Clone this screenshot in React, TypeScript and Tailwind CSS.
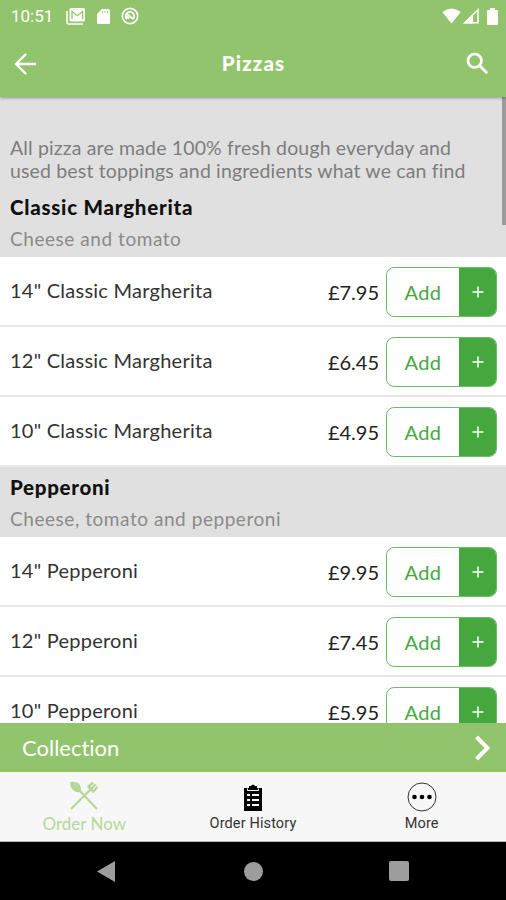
import React from 'react';

const sections = [
  {
    name: 'Classic Margherita',
    nameClass: 'tracking-[0.75px]',
    description: 'Cheese and tomato',
    items: [
      { label: '14" Classic Margherita', price: '£7.95' },
      { label: '12" Classic Margherita', price: '£6.45' },
      { label: '10" Classic Margherita', price: '£4.95' },
    ],
  },
  {
    name: 'Pepperoni',
    nameClass: 'tracking-[0.7px]',
    description: 'Cheese, tomato and pepperoni',
    items: [
      { label: '14" Pepperoni', price: '£9.95' },
      { label: '12" Pepperoni', price: '£7.45' },
      { label: '10" Pepperoni', price: '£5.95' },
    ],
  },
];

function StatusBar() {
  return (
    <div className="flex h-8 items-center pl-[11px] pr-2 text-white">
      <span className="w-[55px] font-['Roboto'] text-[17px] leading-none">10:51</span>
      <svg width="20" height="18" viewBox="0 0 20 18">
        <path d="M1 4v11q0 2 2 2h14" fill="none" stroke="#fff" strokeWidth="1.6" />
        <rect x="3.5" y="1" width="15.5" height="13.5" rx="1.5" fill="#fff" />
        <path d="M6 12V4.500l5.300 4.200 5.300-4.200V12" fill="none" stroke="#91c46c" strokeWidth="1.3" />
      </svg>
      <svg className="ml-[11px]" width="13" height="17" viewBox="0 0 13 17">
        <path d="M5 1h6.500q1.500 0 1.500 1.500v12q0 1.500-1.500 1.500h-10Q0 16 0 14.500V6z" fill="#fff" />
        <path d="M5.500 3v2M8 3v2M10.500 3v2" stroke="#91c46c" strokeWidth="0.8" />
      </svg>
      <svg className="ml-[11px]" width="18" height="18" viewBox="0 0 18 18" fill="none" stroke="#fff">
        <circle cx="9" cy="9" r="7.700" strokeWidth="1.700" />
        <path d="M6 12.200A4.200 4.200 0 1 1 12 12M5.500 6.500l6.500 5.500M8 11.500l-2.500-2" strokeWidth="1.800" />
      </svg>
      <svg className="ml-auto" width="19" height="16" viewBox="0 0 19 16">
        <path d="M.3 4Q9.500-3 18.700 4L9.500 15.500z" fill="#fff" />
      </svg>
      <svg className="ml-0.5" width="16" height="16" viewBox="0 0 16 16">
        <path d="M15 1.800V14.700H2z" fill="none" stroke="#fff" strokeWidth="1.500" />
        <path d="M0 15.500L10 5.500v10z" fill="#fff" />
      </svg>
      <svg className="ml-2" width="11" height="17" viewBox="0 0 11 17">
        <path d="M3 0h5v2h2q1 0 1 1v13q0 1-1 1H1q-1 0-1-1V3q0-1 1-1h2z" fill="#fff" />
      </svg>
    </div>
  );
}

function AddButton() {
  return (
    <div className="ml-[7px] mt-px flex h-[50px] w-[111px] shrink-0 overflow-hidden rounded-[8px] border border-[#6dba69] text-[20px]">
      <span className="flex flex-1 items-center justify-center tracking-[0.4px] text-[#45a83f]">Add</span>
      <span className="flex w-[37px] items-center justify-center bg-[#45a83f] text-white">
        <svg width="12" height="12" viewBox="0 0 12 12" stroke="currentColor" strokeWidth="1.500">
          <path d="M6 .5v11M.5 6h11" />
        </svg>
      </span>
    </div>
  );
}

export default function App() {
  return (
    <div className="flex h-[900px] w-[506px] flex-col overflow-hidden bg-white font-['Lato',sans-serif] [font-variant-ligatures:none]">
      <header className="z-10 h-[97px] shrink-0 bg-[#91c46c] text-white shadow-[0_1px_3px_rgba(0,0,0,0.35)]">
        <StatusBar />
        <div className="flex h-[63px] items-center justify-between px-[14px]">
          <svg width="23" height="22" viewBox="0 0 23 22" fill="none" stroke="currentColor" strokeWidth="2.300">
            <path d="M22 11H2M12 1L2 11l10 10" />
          </svg>
          <h1 className="pl-1 text-[20.500px] font-black leading-none tracking-[1.1px]">Pizzas</h1>
          <svg className="mr-[3px]" width="23" height="23" viewBox="0 0 23 23" fill="none" stroke="currentColor" strokeWidth="2.700">
            <circle cx="8.700" cy="8.700" r="6.700" />
            <path d="M13.500 13.500l7.700 7.700" />
          </svg>
        </div>
      </header>

      <main className="relative h-[626px] shrink-0 overflow-hidden">
        <div className="absolute right-0 top-0 h-32 w-1 bg-[#9b9b9b]" />
        <p className="h-[90px] whitespace-nowrap bg-[#e0e0e0] px-[10px] pt-[39px] text-[19.500px] leading-[23px] text-[#7d7d7d]">
          <span className="block tracking-[0.15px]">All pizza are made 100% fresh dough everyday and</span>
          <span className="block tracking-[0.15px]">used best toppings and ingredients what we can find</span>
        </p>
        {sections.map((section) => (
          <section key={section.name}>
            <div className="h-[70px] bg-[#e0e0e0] px-[10px] pt-[6px]">
              <h2 className={`text-[20.500px] font-black leading-[29px] text-[#111] ${section.nameClass}`}>{section.name}</h2>
              <p className="pt-[3px] text-[19px] leading-[28px] tracking-[0.55px] text-[#8a8a8a]">{section.description}</p>
            </div>
            {section.items.map((item) => (
              <div key={item.label} className="flex h-[70px] items-center border-b-2 border-[#e8e8e8] pl-[10px] pr-[9px]">
                <span className="flex-1 pb-[3px] text-[20px] tracking-[0.25px] text-[#333]">{item.label}</span>
                <span className="pt-px text-[20px] text-[#222]">{item.price}</span>
                <AddButton />
              </div>
            ))}
          </section>
        ))}
      </main>

      <div className="flex h-[49px] shrink-0 items-center justify-between bg-[#91c46c] pl-[22px] pr-[15px] text-white">
        <span className="text-[22px] leading-none">Collection</span>
        <svg width="17" height="26" viewBox="0 0 17 26" fill="none" stroke="currentColor" strokeWidth="4">
          <path d="M2.500 2l11 11-11 11" />
        </svg>
      </div>

      <nav className="grid h-[70px] shrink-0 grid-cols-3 border-b border-[#bbb] bg-[#f7f7f7] font-['Roboto'] text-[14.500px] text-[#333]">
        <div className="flex flex-col items-center pt-[9px] text-[#b4d89a]">
          <svg width="30" height="30" viewBox="0 0 30 30" fill="none" stroke="currentColor">
            <path d="M10 9l18 19M2 28L22 8" strokeWidth="2.200" />
            <path d="M1 1q7-1 10 3 2 4 0 7-4 1-7-2-3-3-3-8z" fill="currentColor" stroke="none" />
            <path d="M18 6l6 6q3-1 5-6l-1-1-3.500 3.500-.7-.7L27.500 4 26 2.500 22.300 6.200l-.7-.7L25 2l-1-1q-5 2-6 5z" fill="currentColor" stroke="none" />
          </svg>
          <span className="pt-px font-['Lato'] text-[17px] leading-[24px]">Order Now</span>
        </div>
        <div className="flex flex-col items-center pt-[12px]">
          <svg width="18" height="28" viewBox="0 0 18 28">
            <path d="M0 4h5V2h2q2-3 4 0h2v2h5v23H0z" fill="#000" />
            <path d="M3 11h3M8 11h7M3 16h3M8 16h7M3 21h3M8 21h7" stroke="#fff" strokeWidth="2" />
            <path d="M3.500 4.500v2h11v-2" fill="none" stroke="#fff" />
          </svg>
          <span className="leading-[24px] tracking-[0.12px]">Order History</span>
        </div>
        <div className="flex flex-col items-center pt-[10px]">
          <svg width="30" height="30" viewBox="0 0 30 30">
            <circle cx="15" cy="15" r="14" fill="none" stroke="#333" />
            <circle cx="7.500" cy="15" r="2.300" />
            <circle cx="15" cy="15" r="2.300" />
            <circle cx="22.500" cy="15" r="2.300" />
          </svg>
          <span className="leading-[24px] tracking-[0.12px]">More</span>
        </div>
      </nav>

      <div className="flex h-[58px] shrink-0 items-center bg-black text-[#9d9d9d]">
        <svg className="ml-[97px]" width="18" height="21" viewBox="0 0 18 21">
          <path d="M18 0v21L0 10.500z" fill="currentColor" />
        </svg>
        <div className="ml-[129px] size-[19px] rounded-full bg-current" />
        <div className="ml-[126px] size-[20px] rounded-[2px] bg-current" />
      </div>
    </div>
  );
}
